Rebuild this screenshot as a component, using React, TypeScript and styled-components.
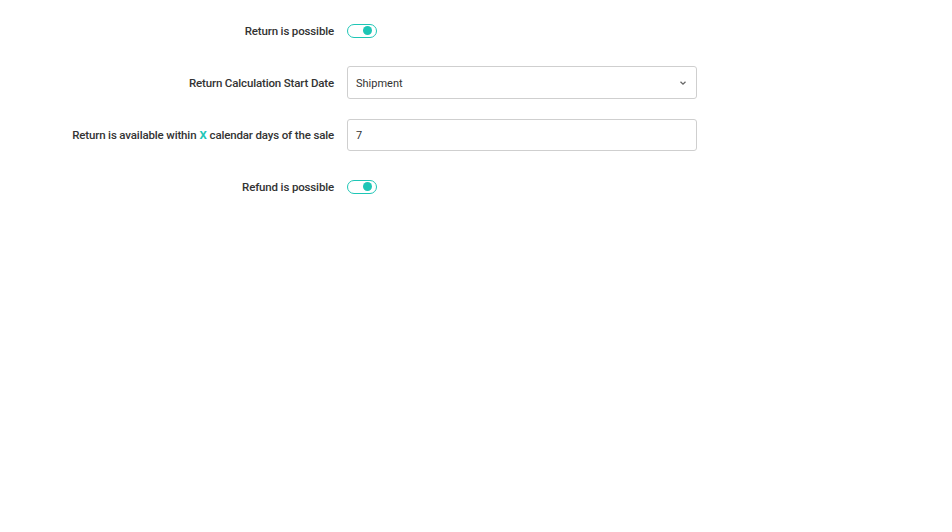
import React from "react";
import styled, { createGlobalStyle } from "styled-components";

const Global = createGlobalStyle`
  html, body { margin: 0; padding: 0; background: #fff; }
  body { font-family: Roboto, "Liberation Sans", sans-serif; color: #333; }
`;

const Form = styled.div`
  display: grid;
  grid-template-columns: 334px 350px;
  grid-auto-rows: 33px;
  column-gap: 13px;
  row-gap: 19px;
  padding-top: 14px;
`;

const Label = styled.label`
  display: flex;
  align-items: center;
  justify-content: flex-end;
  font-size: 11.5px;
  letter-spacing: -0.15px;
  font-weight: 500;
  color: #333;
  white-space: nowrap;
`;

const Accent = styled.span`
  color: #1ec6b6;
  font-weight: 700;
  margin: 0 3px;
`;

const Cell = styled.div`
  display: flex;
  align-items: center;
`;

const Toggle = styled.button<{ $on: boolean }>`
  position: relative;
  width: 30px;
  height: 14px;
  padding: 0;
  border: 1.5px solid #1ec6b6;
  border-radius: 8px;
  background: #fff;
  cursor: pointer;
  &::after {
    content: "";
    position: absolute;
    top: 1px;
    left: ${(p) => (p.$on ? "15px" : "1px")};
    width: 9px;
    height: 9px;
    border-radius: 50%;
    background: #1ec6b6;
  }
`;

const Field = styled.div<{ $h?: number }>`
  box-sizing: border-box;
  width: 350px;
  height: ${(p) => p.$h ?? 33}px;
  border: 1px solid #cfcfcf;
  border-radius: 3px;
  display: flex;
  align-items: center;
  justify-content: space-between;
  padding: 1px 9px 0 8px;
  font-size: 11px;
  color: #333;
  background: #fff;
`;

const Chevron = () => (
  <svg width="8" height="6" viewBox="0 0 8 6">
    <path d="M1.5 1.8 L4 4.2 L6.5 1.8" fill="none" stroke="#666" strokeWidth="1.3" />
  </svg>
);

export default function App() {
  return (
    <>
      <Global />
      <Form>
        <Label>Return is possible</Label>
        <Cell>
          <Toggle $on aria-label="Return is possible" />
        </Cell>

        <Label>Return Calculation Start Date</Label>
        <Cell>
          <Field>
            <span>Shipment</span>
            <Chevron />
          </Field>
        </Cell>

        <Label>
          Return is available within<Accent>X</Accent>calendar days of the sale
        </Label>
        <Cell>
          <Field $h={32}>
            <span>7</span>
          </Field>
        </Cell>

        <Label>Refund is possible</Label>
        <Cell>
          <Toggle $on aria-label="Refund is possible" />
        </Cell>
      </Form>
    </>
  );
}
